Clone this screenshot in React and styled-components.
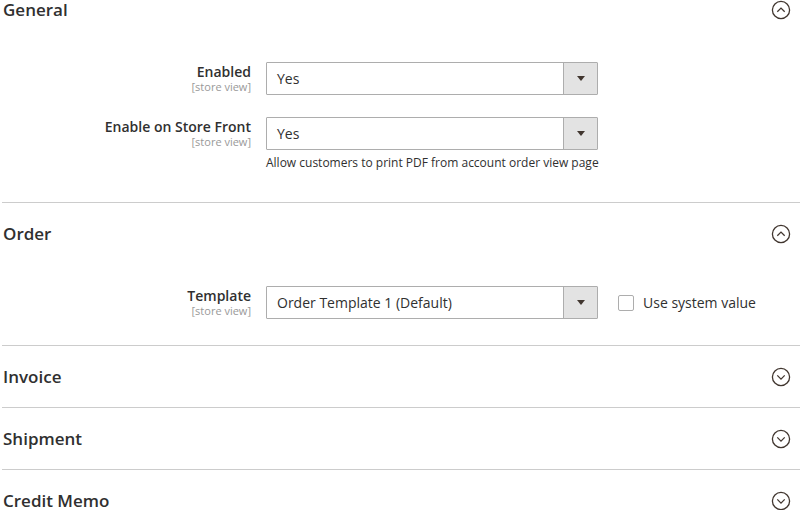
import React from "react";
import styled, { createGlobalStyle } from "styled-components";

const Global = createGlobalStyle`
  html, body { margin: 0; padding: 0; background: #fff; }
  body { font-family: "Open Sans", "Liberation Sans", sans-serif; color: #303030; }
`;

const Page = styled.div`
  padding-left: 2px;
  width: 798px;
`;

const Section = styled.section`
  border-top: ${(p) => (p.$first ? "none" : "1px solid #cccccc")};
`;

const Header = styled.div`
  display: flex;
  align-items: center;
  justify-content: space-between;
  padding: ${(p) => (p.$first ? "0" : "21px")} 9px 20px 1px;
  height: 20px;
`;

const Title = styled.h2`
  margin: 0;
  font-size: 17px;
  font-weight: 600;
  line-height: 20px;
  color: #303030;
`;

const Body = styled.div`
  display: flex;
  flex-direction: column;
  gap: 22px;
  padding: 22px 0 26px;
`;

const Row = styled.div`
  display: grid;
  grid-template-columns: 249px 332px auto;
  column-gap: 15px;
  align-items: start;
`;

const Label = styled.div`
  text-align: right;
  padding-top: 1px;
`;

const LabelText = styled.div`
  font-size: 14px;
  font-weight: 600;
  line-height: 18px;
  color: #303030;
`;

const Scope = styled.div`
  font-size: 11px;
  line-height: 12px;
  color: #999999;
`;

const Control = styled.div`
  display: flex;
  flex-direction: column;
`;

const Select = styled.div`
  display: flex;
  height: 33px;
  box-sizing: border-box;
  border: 1px solid #adadad;
  border-radius: 1px;
  background: #fff;
`;

const SelectValue = styled.div`
  flex: 1;
  padding-left: 10px;
  font-size: 14px;
  line-height: 31px;
  color: #303030;
`;

const SelectButton = styled.div`
  width: 33px;
  border-left: 1px solid #adadad;
  background: #e3e3e3;
  display: flex;
  align-items: center;
  justify-content: center;
  &::after {
    content: "";
    width: 0;
    height: 0;
    border-left: 4px solid transparent;
    border-right: 4px solid transparent;
    border-top: 5px solid #41362f;
  }
`;

const Note = styled.div`
  margin: 4px 0 4px;
  font-size: 12px;
  line-height: 18px;
  white-space: nowrap;
  color: #303030;
`;

const Extra = styled.label`
  display: flex;
  align-items: center;
  gap: 9px;
  height: 33px;
  margin-left: 5px;
  font-size: 14px;
  color: #303030;
`;

const Box = styled.span`
  width: 16px;
  height: 16px;
  box-sizing: border-box;
  border: 1px solid #adadad;
  border-radius: 2px;
  background: #fff;
`;

const Toggle = ({ open }) => (
  <svg width="20" height="20" viewBox="0 0 20 20">
    <circle cx="10" cy="10" r="8.6" fill="none" stroke="#41362f" strokeWidth="1.3" />
    {open ? (
      <path d="M6.3 11.8 L10 8.1 L13.7 11.8" fill="none" stroke="#41362f" strokeWidth="1.3" />
    ) : (
      <path d="M6.3 8.4 L10 12.1 L13.7 8.4" fill="none" stroke="#41362f" strokeWidth="1.3" />
    )}
  </svg>
);

const Field = ({ label, value, note, system }) => (
  <Row>
    <Label>
      <LabelText>{label}</LabelText>
      <Scope>[store view]</Scope>
    </Label>
    <Control>
      <Select>
        <SelectValue>{value}</SelectValue>
        <SelectButton />
      </Select>
      {note && <Note>{note}</Note>}
    </Control>
    {system ? (
      <Extra>
        <Box />
        Use system value
      </Extra>
    ) : (
      <span />
    )}
  </Row>
);

const Group = ({ title, open, first, children }) => (
  <Section $first={first}>
    <Header $first={first}>
      <Title>{title}</Title>
      <Toggle open={open} />
    </Header>
    {open && <Body>{children}</Body>}
  </Section>
);

export default function App() {
  return (
    <Page>
      <Global />
      <Group title="General" open first>
        <Field label="Enabled" value="Yes" />
        <Field
          label="Enable on Store Front"
          value="Yes"
          note="Allow customers to print PDF from account order view page"
        />
      </Group>
      <Group title="Order" open>
        <Field label="Template" value="Order Template 1 (Default)" system />
      </Group>
      <Group title="Invoice" />
      <Group title="Shipment" />
      <Group title="Credit Memo" />
    </Page>
  );
}
